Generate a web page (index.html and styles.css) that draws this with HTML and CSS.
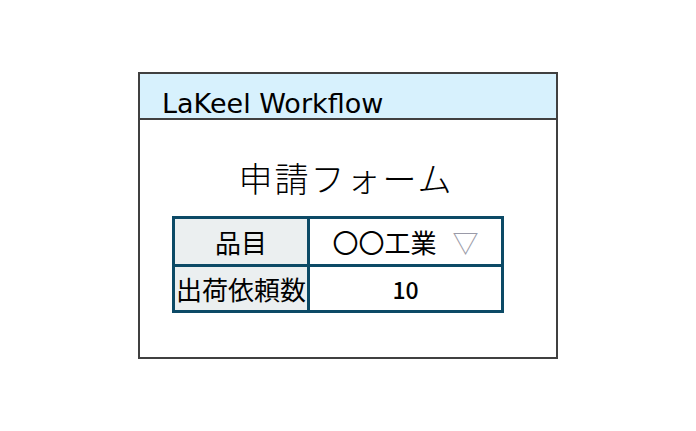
FILE: index.html
```html
<!DOCTYPE html>
<html lang="ja">
<head>
    <meta charset="UTF-8">
    <title>LaKeel Workflow</title>
    <link rel="stylesheet" href="styles.css">
</head>
<body>

    <div class="window">
        <div class="window-title">LaKeel Workflow</div>
        <div class="window-body">
            <h1>申請フォーム</h1>
            <div class="form">
                <div class="label">品目</div>
                <div class="value">〇〇工業<span class="arrow">▽</span></div>
                <div class="label">出荷依頼数</div>
                <div class="value num">10</div>
            </div>
        </div>
    </div>

</body>
</html>
```

FILE: styles.css
```css
body {
    margin: 0;
    min-height: 100vh;
    display: flex;
    align-items: center;
    justify-content: center;
    background-color: #fff;
    font-family: "Noto Sans CJK JP", sans-serif;
    color: #000;
}
.window {
    box-sizing: border-box;
    width: 420px;
    height: 287px;
    border: 2px solid #404040;
    background-color: #fff;
}
.window-title {
    box-sizing: border-box;
    height: 46px;
    padding: 17px 0 0 22px;
    background-color: #d7f1fd;
    border-bottom: 2px solid #404040;
    font-family: "DejaVu Sans", sans-serif;
    font-size: 27px;
    line-height: 26px;
}
.window-body {
    padding: 38px 0 0 32px;
}
h1 {
    margin: 0 0 18px 0;
    padding-right: 36px;
    text-align: center;
    font-size: 34px;
    font-weight: 300;
    letter-spacing: 2px;
    line-height: 40px;
}
.form {
    display: grid;
    grid-template-columns: 132px 191px;
    grid-template-rows: 45px 43px;
    gap: 3px;
    width: max-content;
    border: 3px solid #0c4a66;
    background-color: #0c4a66;
}
.label, .value {
    display: flex;
    align-items: center;
    justify-content: center;
    font-size: 26px;
    white-space: nowrap;
}
.label {
    background-color: #ebeff0;
}
.value {
    background-color: #fff;
}
.arrow {
    margin-left: 16px;
    color: #9a9aa8;
}
.num {
    font-size: 23px;
    font-weight: 500;
}
```
